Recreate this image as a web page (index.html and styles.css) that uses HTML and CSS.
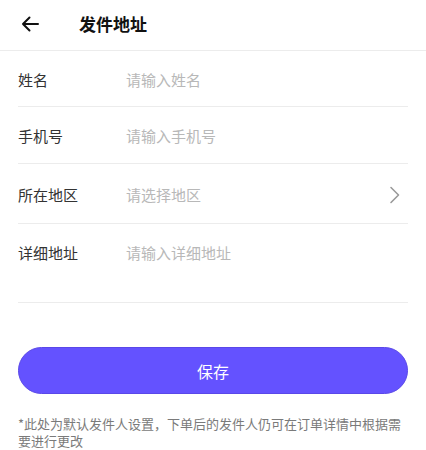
FILE: index.html
```html
<!DOCTYPE html>
<html lang="zh-CN">
  <head>
    <meta charset="UTF-8" />
    <title>发件地址</title>
    <link rel="stylesheet" href="styles.css">
  </head>
  <body>
    <div class="header">
      <span class="back">
        <svg width="18" height="16" viewBox="0 0 18 16">
          <path d="M17 8H2M8.5 1.5L2 8l6.5 6.5" fill="none" stroke="#111" stroke-width="2" stroke-linecap="round" stroke-linejoin="round"/>
        </svg>
      </span>
      <h1 class="title">发件地址</h1>
    </div>

    <div class="form">
      <div class="row row-name">
        <label class="label">姓名</label>
        <span class="placeholder">请输入姓名</span>
      </div>
      <div class="row row-phone">
        <label class="label">手机号</label>
        <span class="placeholder">请输入手机号</span>
      </div>
      <div class="row row-area">
        <label class="label">所在地区</label>
        <span class="placeholder">请选择地区</span>
        <svg class="chevron" width="12" height="18" viewBox="0 0 12 18">
          <path d="M2 1.5L9.5 9L2 16.5" fill="none" stroke="#9a9a9a" stroke-width="1.6" stroke-linecap="round" stroke-linejoin="round"/>
        </svg>
      </div>
      <div class="row row-detail">
        <label class="label">详细地址</label>
        <span class="placeholder">请输入详细地址</span>
      </div>

      <button class="save">保存</button>

      <p class="note">*此处为默认发件人设置，下单后的发件人仍可在订单详情中根据需要进行更改</p>
    </div>
  </body>
</html>
```

FILE: styles.css
```css
/* General styles */
* {
  box-sizing: border-box;
}

body {
  margin: 0;
  padding: 0;
  background-color: #fff;
  font-family: "Noto Sans CJK SC", "Noto Sans", sans-serif;
  color: #333;
}

.header {
  height: 51px;
  display: flex;
  align-items: center;
  border-bottom: 1px solid #ececec;
  padding: 0 0 2px 21px;
}

.back {
  display: flex;
  width: 58px;
}

.title {
  margin: 0;
  font-size: 17px;
  font-weight: bold;
  color: #111;
  line-height: 22px;
}

.form {
  padding: 0 18px;
}

.row {
  display: flex;
  align-items: center;
  border-bottom: 1px solid #ececec;
  font-size: 15px;
  line-height: 22px;
  padding-top: 2px;
}

.row-name {
  height: 56px;
}

.row-phone {
  height: 57px;
}

.row-area {
  height: 60px;
}

.row-detail {
  height: 79px;
  align-items: flex-start;
  padding-top: 18px;
}

.label {
  width: 108px;
  color: #333;
}

.placeholder {
  flex: 1;
  color: #b8b8b8;
}

.chevron {
  margin-right: 7px;
}

.save {
  display: block;
  width: 100%;
  height: 47px;
  margin-top: 44px;
  border: 1px solid #5a48e8;
  border-radius: 24px;
  background-color: #6452ff;
  color: #fff;
  font-family: inherit;
  font-size: 16px;
  cursor: pointer;
}

.note {
  margin: 21px 0 0;
  font-size: 13px;
  line-height: 17px;
  color: #7a7a7a;
}
```
